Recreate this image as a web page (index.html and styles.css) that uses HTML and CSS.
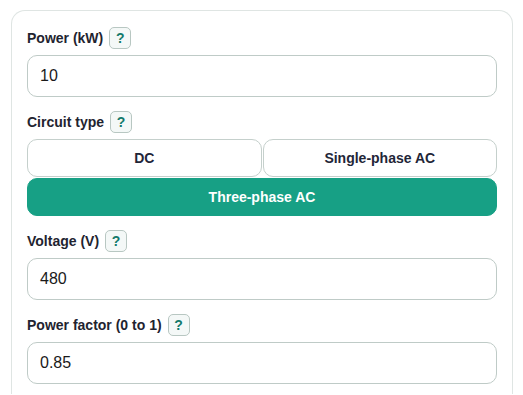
FILE: index.html
```html
<!DOCTYPE html>
<html lang="en">
<head>
<meta charset="utf-8">
<title>Power calculator</title>
<link rel="stylesheet" href="styles.css">
</head>
<body>
<div class="card">
  <div class="field">
    <div class="label-row"><span class="label">Power (kW)</span><span class="help">?</span></div>
    <div class="input">10</div>
  </div>
  <div class="field">
    <div class="label-row"><span class="label">Circuit type</span><span class="help">?</span></div>
    <div class="seg">
      <div class="opt">DC</div>
      <div class="opt">Single-phase AC</div>
      <div class="opt wide active">Three-phase AC</div>
    </div>
  </div>
  <div class="field">
    <div class="label-row"><span class="label">Voltage (V)</span><span class="help">?</span></div>
    <div class="input">480</div>
  </div>
  <div class="field">
    <div class="label-row"><span class="label">Power factor (0 to 1)</span><span class="help">?</span></div>
    <div class="input">0.85</div>
  </div>
</div>
</body>
</html>
```

FILE: styles.css
```css
html, body {
  background: #ffffff;
}
body {
  margin: 10px 10px 0 11px;
  font-family: "Liberation Sans", Arial, sans-serif;
  color: #1f2430;
  overflow: hidden;
}
.card {
  border: 1px solid #dfe5e3;
  border-bottom: none;
  border-radius: 14px 14px 0 0;
  padding: 16px 15px 10px 15px;
  display: flex;
  flex-direction: column;
  gap: 14px;
}
.field {
  display: flex;
  flex-direction: column;
  gap: 6px;
}
.label-row {
  display: flex;
  align-items: center;
  gap: 6px;
  height: 22px;
}
.label {
  font-weight: bold;
  font-size: 14px;
  color: #1f2430;
}
.help {
  box-sizing: border-box;
  width: 22px;
  height: 22px;
  border: 1px solid #b8c7c2;
  border-radius: 5px;
  background: #f4f8f7;
  color: #137a6b;
  font-weight: bold;
  font-size: 14px;
  display: flex;
  align-items: center;
  justify-content: center;
}
.input {
  box-sizing: border-box;
  height: 42px;
  border: 1px solid #bfcbc7;
  border-radius: 10px;
  padding: 0 12px;
  display: flex;
  align-items: center;
  font-size: 16px;
  color: #1a1a1a;
  background: #fff;
}
.seg {
  display: grid;
  grid-template-columns: 1fr 1fr;
  gap: 1px;
}
.opt {
  box-sizing: border-box;
  height: 38px;
  border: 1px solid #c5d0cc;
  border-radius: 10px;
  display: flex;
  align-items: center;
  justify-content: center;
  font-weight: bold;
  font-size: 14px;
  color: #1f2638;
  background: #fff;
}
.opt.wide {
  grid-column: 1 / 3;
}
.opt.active {
  background: #17a085;
  border-color: #17a085;
  color: #ffffff;
}
```
